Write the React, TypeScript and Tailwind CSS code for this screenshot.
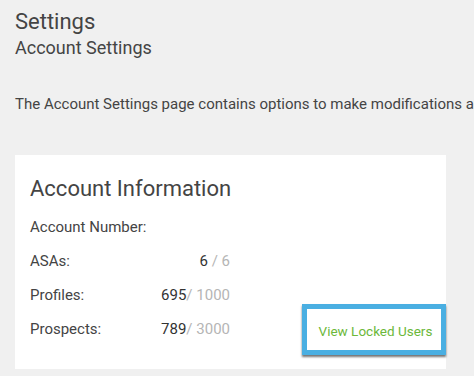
import React from "react";

const rows = [
  { label: "Account Number:", used: "", total: "" },
  { label: "ASAs:", used: "6", total: " / 6" },
  { label: "Profiles:", used: "695", total: "/ 1000" },
  { label: "Prospects:", used: "789", total: "/ 3000" },
];

export default function App() {
  return (
    <div className="bg-[#f0f0f0] px-[15px] pt-2 pb-[7px] text-[#444] font-['Roboto',sans-serif] overflow-hidden">
      {/* header */}
      <h1 className="text-[22px] leading-[28px] font-normal">Settings</h1>
      <h2 className="text-[18px] leading-[24px] font-normal">Account Settings</h2>

      <p className="mt-[34px] text-[15px] leading-[20px] whitespace-nowrap">
        The Account Settings page contains options to make modifications and view account details.
      </p>

      {/* account information card */}
      <div className="mt-[41px] w-[431px] bg-white pl-[15px] pt-5 pb-[14px]">
        <h3 className="text-[22px] leading-[28px] font-normal text-[#444]">
          Account Information
        </h3>

        <div className="flex items-end mt-[14px]">
          <div className="flex flex-col gap-[14px] pb-4">
            {rows.map((r) => (
              <div key={r.label} className="flex text-[15px] leading-[20px]">
                <span className="w-[120px]">{r.label}</span>
                <span className="w-[80px] text-right">
                  <span className="text-[#333]">{r.used}</span>
                  <span className="text-[#b5b5b5]">{r.total}</span>
                </span>
              </div>
            ))}
          </div>

          <button className="ml-auto w-[144px] h-[51px] border-[5px] border-[#4aafe2] bg-white shadow-[0_2px_2px_rgba(0,0,0,0.55)] text-[13.5px] text-[#6cb83a] pl-[3px] pt-[3px] whitespace-nowrap text-center">
            View Locked Users
          </button>
        </div>
      </div>
    </div>
  );
}
